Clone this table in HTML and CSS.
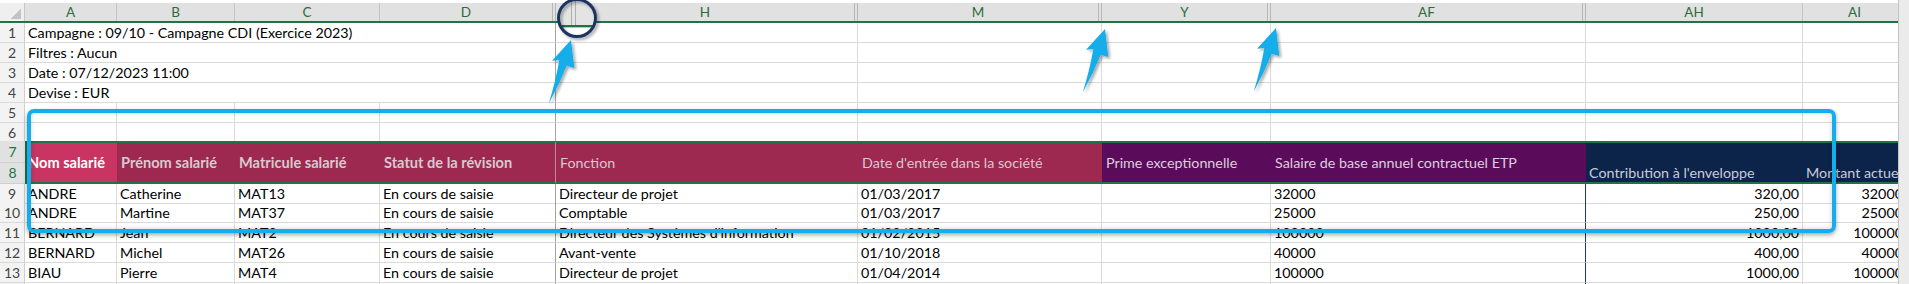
FILE: index.html
```html
<!DOCTYPE html>
<html lang="fr">
<head>
<meta charset="utf-8">
<title>Export campagne</title>
<link rel="stylesheet" href="styles.css">
</head>
<body>
<div class="window">
  <div class="sheet">
    <div class="row colhdr">
      <div class="corner"></div>
      <div class="ch">A</div>
      <div class="ch">B</div>
      <div class="ch">C</div>
      <div class="ch hid">D</div>
      <div class="ch hid">H</div>
      <div class="ch hid">M</div>
      <div class="ch hid">Y</div>
      <div class="ch hid">AF</div>
      <div class="ch">AH</div>
      <div class="ch">AI</div>
    </div>

    <div class="row">
      <div class="rh">1</div>
      <div class="c merged freeze">Campagne : 09/10 - Campagne CDI (Exercice 2023)</div>
      <div class="c"></div><div class="c"></div><div class="c"></div><div class="c"></div><div class="c"></div><div class="c"></div>
    </div>
    <div class="row">
      <div class="rh">2</div>
      <div class="c merged freeze">Filtres : Aucun</div>
      <div class="c"></div><div class="c"></div><div class="c"></div><div class="c"></div><div class="c"></div><div class="c"></div>
    </div>
    <div class="row">
      <div class="rh">3</div>
      <div class="c merged freeze">Date : 07/12/2023 11:00</div>
      <div class="c"></div><div class="c"></div><div class="c"></div><div class="c"></div><div class="c"></div><div class="c"></div>
    </div>
    <div class="row">
      <div class="rh">4</div>
      <div class="c merged freeze">Devise : EUR</div>
      <div class="c"></div><div class="c"></div><div class="c"></div><div class="c"></div><div class="c"></div><div class="c"></div>
    </div>
    <div class="row">
      <div class="rh">5</div>
      <div class="c"></div><div class="c"></div><div class="c"></div><div class="c freeze"></div>
      <div class="c"></div><div class="c"></div><div class="c"></div><div class="c"></div><div class="c"></div><div class="c"></div>
    </div>
    <div class="row short">
      <div class="rh">6</div>
      <div class="c"></div><div class="c"></div><div class="c"></div><div class="c freeze"></div>
      <div class="c"></div><div class="c"></div><div class="c"></div><div class="c"></div><div class="c"></div><div class="c"></div>
    </div>

    <div class="row band">
      <div class="rh2"><span>7</span><span>8</span></div>
      <div class="hc active b">Nom salarié</div>
      <div class="hc mar b">Prénom salarié</div>
      <div class="hc mar b">Matricule salarié</div>
      <div class="hc mar b fz">Statut de la révision</div>
      <div class="hc mar">Fonction</div>
      <div class="hc mar">Date d'entrée dans la société</div>
      <div class="hc pur">Prime exceptionnelle</div>
      <div class="hc pur">Salaire de base annuel contractuel ETP</div>
      <div class="hc navy low">Contribution à l'enveloppe</div>
      <div class="hc navy low">Montant actuel</div>
    </div>

    <div class="row first">
      <div class="rh">9</div>
      <div class="c">ANDRE</div><div class="c">Catherine</div><div class="c">MAT13</div><div class="c freeze">En cours de saisie</div>
      <div class="c">Directeur de projet</div><div class="c">01/03/2017</div><div class="c"></div><div class="c sep">32000</div>
      <div class="c num">320,00</div><div class="c num">32000</div>
    </div>
    <div class="row">
      <div class="rh">10</div>
      <div class="c">ANDRE</div><div class="c">Martine</div><div class="c">MAT37</div><div class="c freeze">En cours de saisie</div>
      <div class="c">Comptable</div><div class="c">01/03/2017</div><div class="c"></div><div class="c sep">25000</div>
      <div class="c num">250,00</div><div class="c num">25000</div>
    </div>
    <div class="row">
      <div class="rh">11</div>
      <div class="c">BERNARD</div><div class="c">Jean</div><div class="c">MAT2</div><div class="c freeze">En cours de saisie</div>
      <div class="c">Directeur des Systèmes d'information</div><div class="c">01/02/2015</div><div class="c"></div><div class="c sep">100000</div>
      <div class="c num">1000,00</div><div class="c num">100000</div>
    </div>
    <div class="row">
      <div class="rh">12</div>
      <div class="c">BERNARD</div><div class="c">Michel</div><div class="c">MAT26</div><div class="c freeze">En cours de saisie</div>
      <div class="c">Avant-vente</div><div class="c">01/10/2018</div><div class="c"></div><div class="c sep">40000</div>
      <div class="c num">400,00</div><div class="c num">40000</div>
    </div>
    <div class="row">
      <div class="rh">13</div>
      <div class="c">BIAU</div><div class="c">Pierre</div><div class="c">MAT4</div><div class="c freeze">En cours de saisie</div>
      <div class="c">Directeur de projet</div><div class="c">01/04/2014</div><div class="c"></div><div class="c sep">100000</div>
      <div class="c num">1000,00</div><div class="c num">100000</div>
    </div>
    <div class="row">
      <div class="rh">14</div>
      <div class="c"></div><div class="c"></div><div class="c"></div><div class="c freeze"></div>
      <div class="c"></div><div class="c"></div><div class="c"></div><div class="c sep"></div><div class="c"></div><div class="c"></div>
    </div>
  </div>
  <div class="vscroll"></div>
</div>

<div class="callout"></div>

<svg class="annot" width="1909" height="284" viewBox="0 0 1909 284">
  <defs>
    <clipPath id="lens"><circle cx="577" cy="18" r="18"/></clipPath>
    <filter id="sh" x="-60%" y="-60%" width="220%" height="220%">
      <feDropShadow dx="2" dy="2" stdDeviation="1.6" flood-color="#000" flood-opacity="0.35"/>
    </filter>
    <path id="arrow" d="M0,0 L3.3,28 L-4.3,25.7 Q-12,45 -22.3,63.4 Q-15,40 -11.7,20 L-19,20.7 Z"/>
  </defs>
  <g clip-path="url(#lens)">
    <rect x="555" y="0" width="45" height="25" fill="#e4e4e4"/>
    <rect x="555" y="25" width="45" height="2.6" fill="#217346"/>
    <rect x="555" y="27.6" width="45" height="12" fill="#ffffff"/>
    <line x1="571.5" y1="0" x2="571.5" y2="25" stroke="#b0b0b0" stroke-width="1"/>
    <line x1="575.5" y1="0" x2="575.5" y2="25" stroke="#b0b0b0" stroke-width="1"/>
  </g>
  <circle cx="577" cy="18" r="18.5" fill="none" stroke="#1f3561" stroke-width="3" filter="url(#sh)"/>
  <g fill="#13aeea" filter="url(#sh)">
    <use href="#arrow" transform="translate(571,40)"/>
    <use href="#arrow" transform="translate(1105,29)"/>
    <use href="#arrow" transform="translate(1276,28)"/>
  </g>
</svg>
</body>
</html>
```
FILE: styles.css
```css
* { box-sizing: border-box; }
html, body { margin: 0; padding: 0; }
body {
  width: 1909px;
  height: 284px;
  overflow: hidden;
  background: #fff;
  font-family: Lato, "Liberation Sans", sans-serif;
  font-size: 14.3px;
  color: #000;
  position: relative;
}
.window { display: flex; height: 284px; }
.sheet { flex: 1; min-width: 0; overflow: hidden; padding-top: 3px; background: #fff; }
.vscroll { width: 11px; background: #ebebeb; border-left: 1px solid #c4c4c4; }

.row {
  display: grid;
  grid-template-columns: 25px 92px 118px 145px 176px 302px 244px 169px 315px 217px 104px;
  height: 20px;
}
.row.short { height: 18px; }
.row.first { height: 19px; }

/* column header */
.colhdr { background: #e1e1e1; border-bottom: 2px solid #217346; }
.corner {
  background: #efefef linear-gradient(135deg, transparent 50%, #c3c3c3 50%) no-repeat;
  background-size: 10px 10px;
  background-position: right 3px bottom 2px;
  border-right: 1px solid #c6c6c6;
}
.ch {
  border-right: 1px solid #c4c4c4;
  text-align: center;
  line-height: 18px;
  font-size: 13.5px;
  color: #2d6b3a;
}
.ch.hid { border-right: 4px double #b7b7b7; }

/* row header */
.rh {
  background: #f3f3f3;
  border-right: 1px solid #cfcfcf;
  border-bottom: 1px solid #dadada;
  text-align: center;
  line-height: 19px;
  font-size: 14px;
  color: #444;
}
.rh2 {
  display: flex;
  flex-direction: column;
  background: #e1e1e1;
  border-bottom: 1px solid #cfcfcf;
  font-size: 14px;
  color: #217346;
}
.rh2 span { flex: 1; display: flex; align-items: center; justify-content: center; }
.rh2 span + span { border-top: 1px solid #d0d0d0; }

/* cells */
.c {
  border-right: 1px solid #dadada;
  border-bottom: 1px solid #dadada;
  padding: 0 3px;
  line-height: 19px;
  white-space: nowrap;
  overflow: hidden;
}
.c.merged { grid-column: 2 / span 4; }
.c.freeze { border-right-color: #a3a3a3; }
.c.sep { border-right-color: #1f3a6e; }
.c.num { text-align: right; }

/* header band rows 7-8 */
.band { height: 43px; }
.hc {
  display: flex;
  align-items: center;
  padding: 0 4px;
  white-space: nowrap;
  overflow: hidden;
  border-top: 2px solid #217346;
  border-bottom: 2px solid #217346;
  line-height: 19px;
}
.hc.b { font-weight: 700; font-size: 14.6px; }
.hc.active { background: #c93462; color: #fff; border-left: 2px solid #217346; padding-left: 1px; }
.hc.mar { background: #9d2850; color: #d8c8cf; }
.hc.fz { border-right: 1px solid #b58a9a; }
.hc.pur { background: #5a0c5b; color: #dccfdc; }
.hc.navy { background: #0c234a; color: #c7cdd8; padding-left: 3px; }
.hc.low { align-items: flex-end; }

/* annotations */
.callout {
  position: absolute;
  left: 27px;
  top: 109px;
  width: 1809px;
  height: 124px;
  border: 4px solid #14aeea;
  border-radius: 7px;
  box-shadow: 0 2px 4px rgba(0, 0, 0, 0.35), inset 0 0 5px rgba(0, 0, 0, 0.18);
  pointer-events: none;
}
.annot {
  position: absolute;
  left: 0;
  top: 0;
  pointer-events: none;
}
```
